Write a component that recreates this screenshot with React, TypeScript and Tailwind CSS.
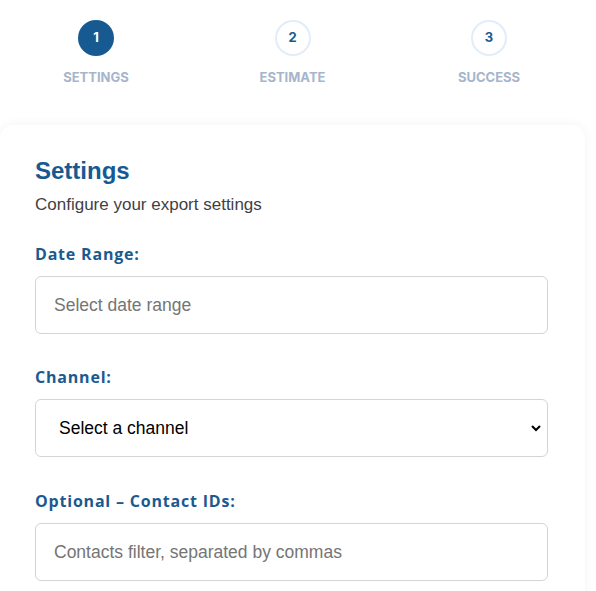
const steps = [
  { n: 1, label: "SETTINGS", active: true },
  { n: 2, label: "ESTIMATE", active: false },
  { n: 3, label: "SUCCESS", active: false },
];

const labelCls =
  "block text-[16px] font-bold leading-5 tracking-[0.05em] text-[#1b5a8f] [font-family:'Open_Sans',Inter,sans-serif]";
const fieldCls =
  "h-[58px] w-full rounded-[6px] border border-[#d4d4d8] bg-white px-[18px] text-[17.5px] text-black outline-none placeholder:text-[#757575] [font-family:'Liberation_Sans',Arial,sans-serif]";

export default function App() {
  return (
    <div className="h-[591px] w-[596px] overflow-hidden bg-white">
      <div className="flex pt-[20px]">
        {steps.map((s, i) => (
          <div
            key={s.n}
            className={
              "flex flex-col items-center " +
              (i === 0 ? "w-[192px]" : i === 1 ? "w-[201px]" : "w-[192px]")
            }
          >
            {s.active ? (
              <div className="flex h-[36px] w-[36px] items-center justify-center rounded-full bg-[#175a92] text-[13px] font-bold text-white [font-family:Inter,sans-serif]">
                {s.n}
              </div>
            ) : (
              <div className="flex h-[36px] w-[36px] items-center justify-center rounded-full border-2 border-[#e2edf9] bg-white text-[13px] font-bold text-[#1b5a8f] [font-family:Inter,sans-serif]">
                {s.n}
              </div>
            )}
            <span className="mt-[13px] text-[13px] font-bold leading-4 text-[#a6b5cb] [font-family:Inter,sans-serif]">
              {s.label}
            </span>
          </div>
        ))}
      </div>

      <div className="mt-[40px] w-[585px] rounded-t-[14px] bg-white px-[35px] pt-[32px] pb-[30px] shadow-[0_0_12px_rgba(15,40,90,0.05)]">
        <h1 className="text-[24px] font-bold leading-7 text-[#175a92] [font-family:'Liberation_Sans',Arial,sans-serif]">
          Settings
        </h1>
        <p className="mt-[10px] text-[17px] leading-5 text-[#3f3f46] [font-family:'Liberation_Sans',Arial,sans-serif]">
          Configure your export settings
        </p>

        <div className="mt-[29px] w-[513px]">
          <label className={labelCls}>Date Range:</label>
          <input className={"mt-[12px] " + fieldCls} placeholder="Select date range" />

          <label className={"mt-[33px] " + labelCls}>Channel:</label>
          <div className="relative mt-[12px]">
            <select className={fieldCls + " appearance-none pl-[23px]"} defaultValue="">
              <option value="">Select a channel</option>
            </select>
            <svg
              className="pointer-events-none absolute right-[6px] top-1/2 h-[12px] w-[12px] -translate-y-1/2"
              viewBox="0 0 12 12"
              fill="none"
              stroke="#000"
              strokeWidth="2"
            >
              <path d="M2 4l4 4 4-4" />
            </svg>
          </div>

          <label className={"mt-[34px] " + labelCls}>Optional – Contact IDs:</label>
          <input className={"mt-[12px] " + fieldCls} placeholder="Contacts filter, separated by commas" />
        </div>
      </div>
    </div>
  );
}
